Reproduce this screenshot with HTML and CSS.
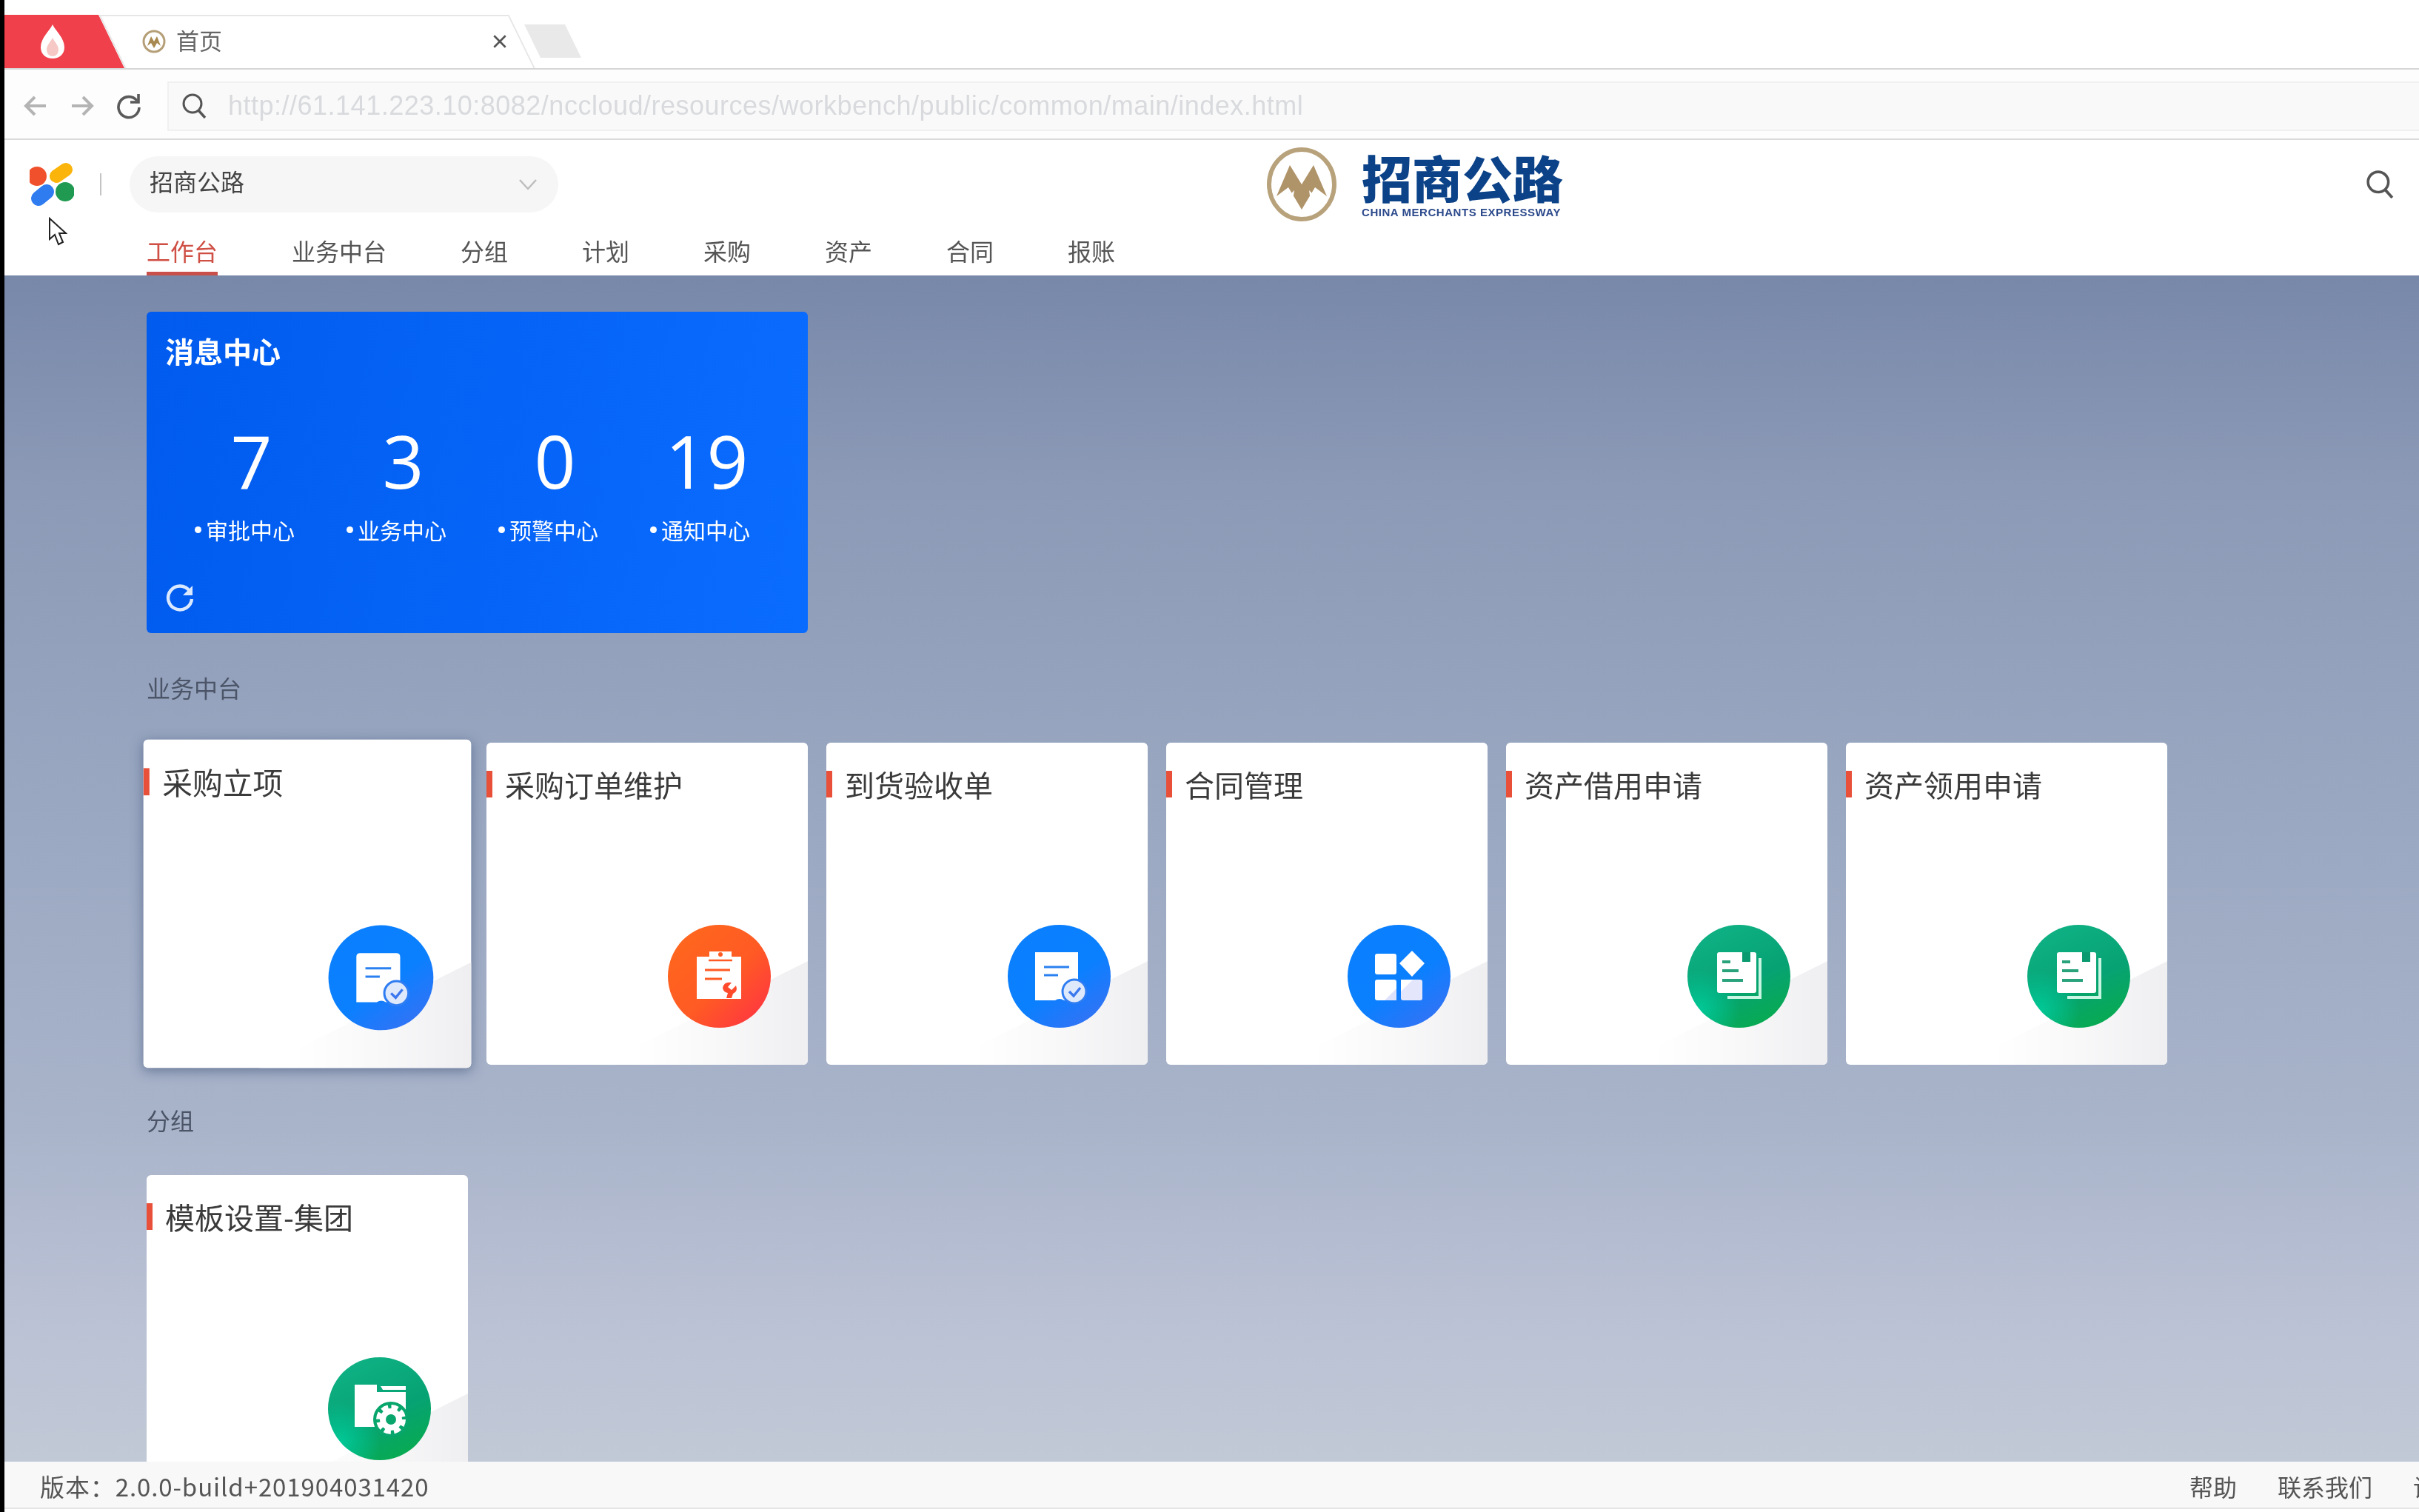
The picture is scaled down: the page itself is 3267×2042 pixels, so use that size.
FILE: index.html
```html
<!DOCTYPE html>
<html lang="zh-CN">
<head>
    <meta charset="UTF-8">
    <meta name="viewport" content="width=device-width, initial-scale=1.0">
    <title>首页</title>
    <link rel="stylesheet" href="styles.css">
</head>
<body>
<div class="window">

    <!-- browser tabs -->
    <div class="tabstrip">
        <div class="brand-tab">
            <svg class="drop" viewBox="0 0 36 46">
                <path d="M18 0C22 9 34 18 34 31C34 40 27 46 18 46C9 46 2 40 2 31C2 18 14 9 18 0Z" fill="#fff"/>
                <path d="M18 18C21 24 26 28 26 34C26 40 22 43 18 43C14 43 10 40 10 34C10 28 15 24 18 18Z" fill="#f6c9c6"/>
            </svg>
        </div>
        <div class="tab">
            <svg class="favicon" viewBox="0 0 32 32">
                <circle cx="16" cy="16" r="14" fill="none" stroke="#b59f78" stroke-width="3"/>
                <path d="M7 22L12 9L16 16L20 9L25 22L20 18L16 25L12 18Z" fill="#a8894f"/>
            </svg>
            <span class="tab-title">首页</span>
            <svg class="tab-close" viewBox="0 0 20 20">
                <path d="M3 3L17 17M17 3L3 17" stroke="#555" stroke-width="2.4"/>
            </svg>
        </div>
        <div class="new-tab"></div>
    </div>

    <!-- browser address row -->
    <div class="toolbar">
        <svg class="tool-icon" viewBox="0 0 36 36">
            <path d="M32 18H6M17 6L5 18L17 30" fill="none" stroke="#b4b4b4" stroke-width="4"/>
        </svg>
        <svg class="tool-icon" viewBox="0 0 36 36">
            <path d="M4 18H30M19 6L31 18L19 30" fill="none" stroke="#b4b4b4" stroke-width="4"/>
        </svg>
        <svg class="tool-icon" viewBox="0 0 36 36">
            <path d="M29 11A14 14 0 1 0 32 20" fill="none" stroke="#5a5a5a" stroke-width="3.6"/>
            <path d="M31 2V13H20" fill="none" stroke="#5a5a5a" stroke-width="3.6"/>
        </svg>
        <div class="address">
            <svg class="address-search" viewBox="0 0 36 36">
                <circle cx="16" cy="15" r="12" fill="none" stroke="#555" stroke-width="3"/>
                <path d="M24 24L33 34" stroke="#555" stroke-width="3.4"/>
            </svg>
            <span class="url">http://61.141.223.10:8082/nccloud/resources/workbench/public/common/main/index.html</span>
        </div>
    </div>

    <!-- app header -->
    <div class="topbar">
        <div class="topbar-row">
            <svg class="flower" viewBox="0 0 60 60">
                <circle cx="10" cy="19" r="13" fill="#f0502b"/>
                <path d="M36 19L49 10" stroke="#fbb40a" stroke-width="18" stroke-linecap="round"/>
                <path d="M12 49L23 40" stroke="#2f7cf0" stroke-width="20" stroke-linecap="round"/>
                <circle cx="48" cy="40" r="13" fill="#1f9a50"/>
            </svg>
            <div class="divider"></div>
            <div class="org-select">
                <span class="org-name">招商公路</span>
                <svg class="chevron" viewBox="0 0 28 18">
                    <path d="M3 3L14 15L25 3" fill="none" stroke="#bdbdbd" stroke-width="2.4"/>
                </svg>
            </div>
            <div class="logo">
                <svg class="logo-mark" viewBox="0 0 96 100">
                    <ellipse cx="48" cy="50" rx="44" ry="47" fill="none" stroke="#b8a27c" stroke-width="6"/>
                    <path d="M14 66L32 24L48 50L64 24L82 66L66 54L48 84L30 54Z" fill="#b09469"/>
                    <path d="M30 66L38 58L36 72ZM66 66L58 58L60 72Z" fill="#fff"/>
                </svg>
                <div class="logo-text">
                    <div class="logo-cn">招商公路</div>
                    <div class="logo-en">CHINA MERCHANTS EXPRESSWAY</div>
                </div>
            </div>
            <svg class="top-search" viewBox="0 0 36 36">
                <circle cx="16" cy="15" r="13" fill="none" stroke="#555" stroke-width="3.4"/>
                <path d="M25 25L34 35" stroke="#555" stroke-width="3.6"/>
            </svg>
        </div>
        <div class="nav">
            <div class="nav-item active">工作台</div>
            <div class="nav-item">业务中台</div>
            <div class="nav-item">分组</div>
            <div class="nav-item">计划</div>
            <div class="nav-item">采购</div>
            <div class="nav-item">资产</div>
            <div class="nav-item">合同</div>
            <div class="nav-item">报账</div>
        </div>
    </div>

    <div class="main">
        <div class="msg-card">
            <div class="msg-title">消息中心</div>
            <div class="stats">
                <div class="stat"><div class="stat-num">7</div><div class="stat-label">审批中心</div></div>
                <div class="stat"><div class="stat-num">3</div><div class="stat-label">业务中心</div></div>
                <div class="stat"><div class="stat-num">0</div><div class="stat-label">预警中心</div></div>
                <div class="stat"><div class="stat-num">19</div><div class="stat-label">通知中心</div></div>
            </div>
            <svg class="refresh" viewBox="0 0 40 40">
                <path d="M33 11A16 16 0 1 0 36 22" fill="none" stroke="#dbe9ff" stroke-width="4.4"/>
                <path d="M37 4V17H24Z" fill="#dbe9ff"/>
            </svg>
        </div>

        <div class="section-title">业务中台</div>
        <div class="card-row">
            <div class="card card-active">
                <div class="card-title">采购立项</div>
                <div class="card-icon blue">
                    <svg viewBox="0 0 139 139">
                        <path d="M42 37H90Q95 37 95 42V102H76Q70 98 64 102H37V42Q37 37 42 37Z" fill="#fff"/>
                        <path d="M49 57H83M49 68H68" stroke="#2a80f0" stroke-width="3"/>
                        <circle cx="90" cy="90" r="16" fill="#dfe9fc" stroke="#2f7df2" stroke-width="3"/>
                        <path d="M83 90L89 96L98 85" fill="none" stroke="#3b78ee" stroke-width="3.4"/>
                    </svg>
                </div>
            </div>
            <div class="card">
                <div class="card-title">采购订单维护</div>
                <div class="card-icon orange">
                    <svg viewBox="0 0 139 139">
                        <path d="M39 43H56V36H86V43H99V100H39Z" fill="#fff"/>
                        <path d="M55 48H87" stroke="#ff5a24" stroke-width="2.5"/>
                        <circle cx="71" cy="40" r="3" fill="#ff5a24"/>
                        <path d="M50 61H84M50 73H73" stroke="#ff5a24" stroke-width="3"/>
                        <path d="M74 85Q76 76 86 78L81 84L86 88L92 82Q95 90 88 93L86 99H79L81 92Q75 91 74 85Z" fill="#ff4a2c"/>
                    </svg>
                </div>
            </div>
            <div class="card">
                <div class="card-title">到货验收单</div>
                <div class="card-icon blue">
                    <svg viewBox="0 0 139 139">
                        <path d="M37 37H95V102H76Q70 98 64 102H37Z" fill="#fff"/>
                        <path d="M49 57H83M49 68H68" stroke="#2a80f0" stroke-width="3"/>
                        <circle cx="90" cy="90" r="16" fill="#dfe9fc" stroke="#2f7df2" stroke-width="3"/>
                        <path d="M83 90L89 96L98 85" fill="none" stroke="#3b78ee" stroke-width="3.4"/>
                    </svg>
                </div>
            </div>
            <div class="card">
                <div class="card-title">合同管理</div>
                <div class="card-icon blue">
                    <svg viewBox="0 0 139 139">
                        <rect x="37" y="39" width="29" height="28" rx="3" fill="#fff"/>
                        <path d="M87 35L104 52L87 70L70 52Z" fill="#fff"/>
                        <rect x="37" y="74" width="29" height="28" rx="3" fill="#fff"/>
                        <path d="M50 102L66 86V102Z" fill="#dfe2fb"/>
                        <rect x="72" y="74" width="29" height="28" rx="3" fill="#e4e7fc"/>
                        <path d="M72 90L88 74H72Z" fill="#fff"/>
                    </svg>
                </div>
            </div>
            <div class="card">
                <div class="card-title">资产借用申请</div>
                <div class="card-icon green">
                    <svg viewBox="0 0 139 139">
                        <path d="M96 45H100V100H54V96H96Z" fill="#c9f5e3"/>
                        <rect x="40" y="37" width="53" height="55" rx="3" fill="#fff"/>
                        <path d="M74 37H85V50H74Z" fill="#0a9a70"/>
                        <path d="M47 50H58M47 62H69M47 75H75" stroke="#2aa37d" stroke-width="4"/>
                    </svg>
                </div>
            </div>
            <div class="card">
                <div class="card-title">资产领用申请</div>
                <div class="card-icon green">
                    <svg viewBox="0 0 139 139">
                        <path d="M96 45H100V100H54V96H96Z" fill="#c9f5e3"/>
                        <rect x="40" y="37" width="53" height="55" rx="3" fill="#fff"/>
                        <path d="M74 37H85V50H74Z" fill="#0a9a70"/>
                        <path d="M47 50H58M47 62H69M47 75H75" stroke="#2aa37d" stroke-width="4"/>
                    </svg>
                </div>
            </div>
        </div>

        <div class="section-title">分组</div>
        <div class="card-row">
            <div class="card">
                <div class="card-title">模板设置-集团</div>
                <div class="card-icon green">
                    <svg viewBox="0 0 139 139">
                        <path d="M36 37H66V47H105V94H36Z" fill="#fff"/>
                        <path d="M71 39H105V44H74Z" fill="#fff"/>
                        <circle cx="85" cy="84" r="24" fill="#08a56c"/>
                        <circle cx="85" cy="84" r="15" fill="#fff"/>
                        <circle cx="85" cy="84" r="17" fill="none" stroke="#fff" stroke-width="6" stroke-dasharray="9 4.35"/>
                        <circle cx="85" cy="84" r="7" fill="#08a56c"/>
                    </svg>
                </div>
            </div>
        </div>
    </div>

    <div class="footer">
        <span class="version">版本：2.0.0-build+201904031420</span>
        <div class="footer-links">
            <span>帮助</span>
            <span>联系我们</span>
            <span>设置</span>
        </div>
    </div>

    <svg class="cursor" viewBox="0 0 26 40">
        <path d="M2 2V30L9 24L14 37L20 34L15 22H24Z" fill="#fff" stroke="#222" stroke-width="2"/>
    </svg>
</div>
</body>
</html>
```

FILE: styles.css
```css
* {
    box-sizing: border-box;
}
html, body {
    margin: 0;
    padding: 0;
    height: 100%;
    overflow: hidden;
}
body {
    background-color: #000;
    font-family: "Noto Sans CJK SC", "Noto Sans", sans-serif;
    color: #555;
}
.window {
    position: relative;
    display: flex;
    flex-direction: column;
    margin-left: 6px;
    width: 3261px;
    height: 2042px;
    background-color: #fff;
    overflow: hidden;
    filter: blur(0.7px); /* the source is a soft video frame */
}

/* browser tabs */
.tabstrip {
    display: flex;
    flex-shrink: 0;
    height: 94px;
    padding-top: 20px;
    border-bottom: 2px solid #d6d6d6;
}
.brand-tab {
    display: flex;
    align-items: center;
    width: 162px;
    padding-left: 47px;
    background-color: #f0404c;
    clip-path: polygon(0 0, 127px 0, 162px 100%, 0 100%);
}
.drop {
    width: 36px;
    height: 46px;
}
.tab {
    position: relative;
    display: flex;
    align-items: center;
    width: 554px;
    margin-left: -17px;
    padding: 0 19px 0 41px;
}
.tab::before {
    content: "";
    position: absolute;
    top: 0;
    right: 0;
    bottom: 0;
    left: 0;
    border: 2px solid #e6e6e6;
    border-bottom: none;
    background-color: #fff;
    transform: skewX(26deg);
}
.favicon {
    position: relative;
    width: 32px;
    height: 32px;
}
.tab-title {
    position: relative;
    margin-left: 14px;
    padding-bottom: 5px;
    font-size: 31px;
    color: #666;
}
.tab-close {
    position: relative;
    width: 22px;
    height: 22px;
    margin-left: auto;
}
.new-tab {
    width: 55px;
    height: 45px;
    margin: 13px 0 0 14px;
    background-color: #e9e9e9;
    transform: skewX(26deg);
}

/* browser address row */
.toolbar {
    display: flex;
    flex-shrink: 0;
    align-items: center;
    height: 95px;
    padding: 5px 0 0 24px;
    border-bottom: 2px solid #dadada;
    background-color: #fdfdfd;
}
.tool-icon {
    width: 36px;
    height: 36px;
    margin-right: 27px;
}
.address {
    display: flex;
    flex: 1;
    align-items: center;
    height: 67px;
    margin-left: 7px;
    padding-left: 16px;
    border: 2px solid #f0f0f0;
    border-right: none;
    background-color: #f9f9f9;
}
.address-search {
    width: 36px;
    height: 36px;
}
.url {
    margin-left: 28px;
    font-family: "Liberation Sans", sans-serif;
    font-size: 36px;
    letter-spacing: 0.5px;
    color: #d8dadd;
    white-space: nowrap;
}

/* app header */
.topbar {
    flex-shrink: 0;
    height: 183px;
    background-color: #fff;
}
.topbar-row {
    display: flex;
    align-items: center;
    height: 120px;
    padding-left: 34px;
}
.flower {
    width: 60px;
    height: 60px;
}
.divider {
    width: 2px;
    height: 30px;
    margin-left: 35px;
    background-color: #c4c4c4;
}
.org-select {
    display: flex;
    align-items: center;
    justify-content: space-between;
    width: 579px;
    height: 76px;
    margin-left: 38px;
    padding: 0 27px;
    border-radius: 38px;
    background-color: #f6f6f6;
    font-size: 32px;
    color: #444;
}
.org-name {
    padding-bottom: 10px;
}
.chevron {
    width: 28px;
    height: 18px;
}
.logo {
    display: flex;
    align-items: center;
    margin-left: 956px;
}
.logo-mark {
    width: 96px;
    height: 100px;
}
.logo-text {
    margin-left: 33px;
}
.logo-cn {
    height: 72px;
    font-size: 68px;
    line-height: 72px;
    font-weight: 900;
    color: #0b4288;
}
.logo-en {
    margin-top: 3px;
    font-family: "Liberation Sans", sans-serif;
    font-size: 15px;
    line-height: 18px;
    font-weight: 700;
    letter-spacing: 0.55px;
    color: #2d4a8c;
    white-space: nowrap;
}
.top-search {
    width: 38px;
    height: 38px;
    margin-left: auto;
    margin-right: 34px;
}
.nav {
    display: flex;
    gap: 100px;
    height: 63px;
    padding-left: 192px;
}
.nav-item {
    height: 63px;
    padding-top: 7px;
    font-size: 32px;
    line-height: 44px;
    color: #555;
}
.nav-item.active {
    color: #cf4f45;
    border-bottom: 5px solid #c9504a;
}

/* workbench */
.main {
    flex: 1;
    min-height: 0;
    padding: 49px 0 0 192px;
    overflow: hidden;
    background: linear-gradient(180deg, #7888a9 0%, #8c9ab7 18%, #98a6c0 42%, #a9b4ca 72%, #b9c0d4 86%, #c1c9d6 100%);
}
.msg-card {
    width: 893px;
    height: 434px;
    padding: 24px 0 0 25px;
    border-radius: 6px;
    background: linear-gradient(100deg, #005bee 0%, #0a6cff 100%);
    color: #fff;
}
.msg-title {
    font-size: 39px;
    line-height: 56px;
    font-weight: 700;
}
.stats {
    display: flex;
    margin: 71px 0 0 14px;
}
.stat {
    display: flex;
    flex-direction: column;
    align-items: center;
    width: 205px;
}
.stat-num {
    font-family: "Open Sans", sans-serif;
    font-size: 98px;
    line-height: 100px;
}
.stat-label {
    display: flex;
    align-items: center;
    margin: 23px 18px 0 0;
    font-size: 30px;
    line-height: 40px;
    white-space: nowrap;
}
.stat-label::before {
    content: "";
    width: 9px;
    height: 9px;
    margin-right: 6px;
    border-radius: 50%;
    background-color: #fff;
}
.refresh {
    display: block;
    width: 40px;
    height: 40px;
    margin-top: 52px;
}
.section-title {
    margin: 51px 0 53px;
    font-size: 32px;
    line-height: 44px;
    color: #4c5568;
}
.card-row + .section-title {
    margin-top: 52px;
}
.card-row {
    display: flex;
    gap: 25px;
}
.card {
    position: relative;
    display: flex;
    flex-direction: column;
    flex-shrink: 0;
    width: 434px;
    height: 435px;
    border-radius: 6px;
    background-color: #fff;
    overflow: hidden;
}
.card::before {
    content: "";
    position: absolute;
    top: 38px;
    left: 0;
    width: 8px;
    height: 36px;
    background-color: #e8503a;
}
/* long shadow behind the round icon */
.card::after {
    content: "";
    position: absolute;
    right: -20px;
    bottom: -20px;
    width: 340px;
    height: 170px;
    background: linear-gradient(90deg, #ffffff 25%, #f8f8f9 60%, #ededf0 100%);
    clip-path: polygon(100% 0, 100% 100%, 0 100%);
    filter: blur(8px);
}
.card-active {
    transform: scale(1.02);
    box-shadow: 0 4px 16px rgba(50, 70, 110, 0.5);
}
.card-title {
    padding: 31px 0 0 25px;
    font-size: 40px;
    line-height: 50px;
    color: #3a3a3a;
    white-space: nowrap;
}
.card-icon {
    position: relative;
    z-index: 1;
    align-self: flex-end;
    width: 139px;
    height: 139px;
    margin: auto 50px 50px 0;
    border-radius: 50%;
}
.card-icon svg {
    display: block;
    width: 139px;
    height: 139px;
}
.blue {
    background: linear-gradient(145deg, #0a7fff 0%, #0a80ff 55%, #3f6ff2 100%);
}
.orange {
    background: linear-gradient(135deg, #ff6a1c 0%, #ff5a24 55%, #ff2e48 100%);
}
.green {
    background: radial-gradient(circle at 12% 82%, #00c896 0%, rgba(0, 200, 150, 0) 32%), linear-gradient(155deg, #10b487 0%, #07a274 55%, #08ad47 100%);
}

.footer {
    display: flex;
    flex-shrink: 0;
    align-items: center;
    justify-content: space-between;
    height: 64px;
    margin-bottom: 4px;
    padding: 4px 0 0 48px;
    border-bottom: 2px solid #e4e4e4;
    background-color: #f8f8f8;
    font-size: 32px;
    color: #555;
}
.version {
    font-size: 33px;
    letter-spacing: 0.9px;
}
.footer-links {
    display: flex;
    gap: 55px;
    margin-right: -56px;
    font-size: 32px;
}
.cursor {
    position: absolute;
    top: 293px;
    left: 59px;
    width: 26px;
    height: 40px;
}
```
